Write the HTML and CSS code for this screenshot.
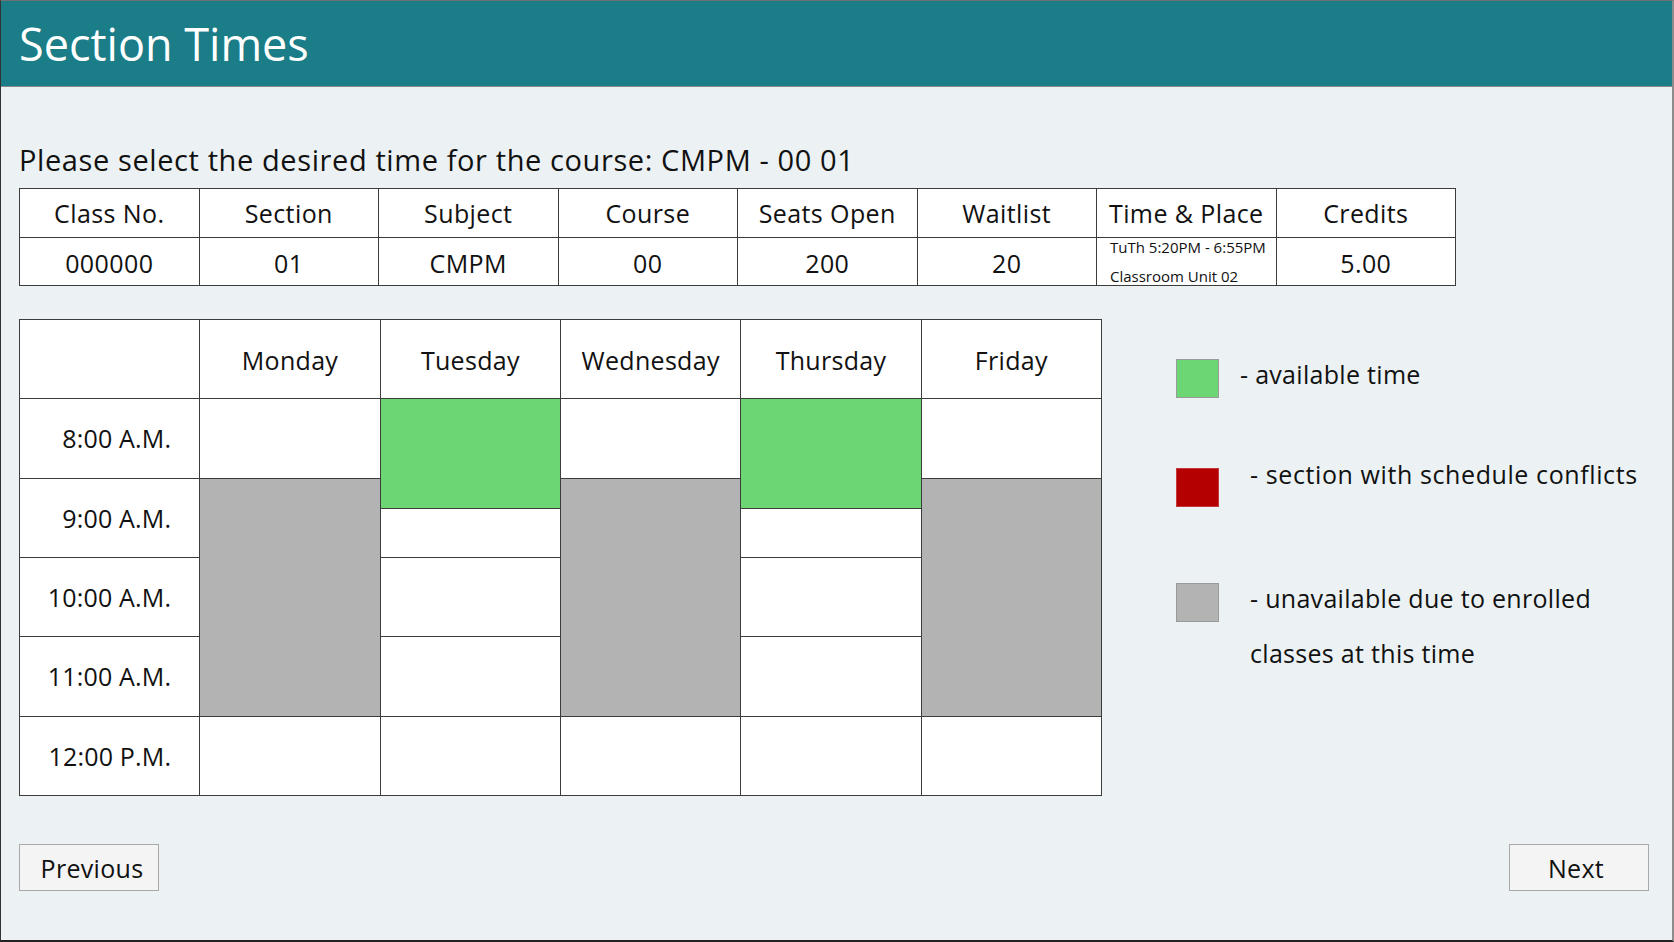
FILE: index.html
```html
<!DOCTYPE html>
<html lang="en">
<head>
<meta charset="utf-8">
<title>Section Times</title>
<link rel="stylesheet" href="styles.css">
</head>
<body>
<div class="page">
  <header class="topbar">
    <h1 class="title">Section Times</h1>
  </header>
  <main class="content">
    <p class="prompt">Please select the desired time for the course: CMPM - 00 01</p>

    <div class="info-table">
      <div class="info-cell">Class No.</div>
      <div class="info-cell">Section</div>
      <div class="info-cell">Subject</div>
      <div class="info-cell">Course</div>
      <div class="info-cell">Seats Open</div>
      <div class="info-cell">Waitlist</div>
      <div class="info-cell">Time &amp; Place</div>
      <div class="info-cell">Credits</div>
      <div class="info-cell info-cell--data">000000</div>
      <div class="info-cell info-cell--data">01</div>
      <div class="info-cell info-cell--data">CMPM</div>
      <div class="info-cell info-cell--data">00</div>
      <div class="info-cell info-cell--data">200</div>
      <div class="info-cell info-cell--data">20</div>
      <div class="info-cell info-cell--place">
        <div class="place-line">TuTh 5:20PM - 6:55PM</div>
        <div class="place-line place-line--room">Classroom Unit 02</div>
      </div>
      <div class="info-cell info-cell--data">5.00</div>
    </div>

    <div class="schedule-row">
      <div class="schedule">
        <div class="cell"></div>
        <div class="cell day">Monday</div>
        <div class="cell day">Tuesday</div>
        <div class="cell day">Wednesday</div>
        <div class="cell day">Thursday</div>
        <div class="cell day">Friday</div>

        <div class="cell time">8:00 A.M.</div>
        <div class="cell"></div>
        <div class="cell split"><div class="avail"></div><div class="rest"></div></div>
        <div class="cell"></div>
        <div class="cell split"><div class="avail"></div><div class="rest"></div></div>
        <div class="cell"></div>

        <div class="cell time">9:00 A.M.</div>
        <div class="cell busy"></div>
        <div class="cell busy"></div>
        <div class="cell busy"></div>

        <div class="cell time">10:00 A.M.</div>
        <div class="cell"></div>
        <div class="cell"></div>

        <div class="cell time">11:00 A.M.</div>
        <div class="cell"></div>
        <div class="cell"></div>

        <div class="cell time">12:00 P.M.</div>
        <div class="cell"></div>
        <div class="cell"></div>
        <div class="cell"></div>
        <div class="cell"></div>
        <div class="cell"></div>
      </div>

      <div class="legend">
        <div class="legend-item legend-item--first">
          <span class="swatch swatch--green"></span>
          <span class="legend-text legend-text--near">- available time</span>
        </div>
        <div class="legend-item legend-item--second">
          <span class="swatch swatch--red"></span>
          <span class="legend-text">- section with schedule conflicts</span>
        </div>
        <div class="legend-item legend-item--third">
          <span class="swatch swatch--gray"></span>
          <span class="legend-text legend-text--tight">- unavailable due to enrolled<br>classes at this time</span>
        </div>
      </div>
    </div>

    <div class="actions">
      <button class="btn btn--prev" type="button">Previous</button>
      <button class="btn btn--next" type="button">Next</button>
    </div>
  </main>
</div>
</body>
</html>
```
FILE: styles.css
```css
* { box-sizing: border-box; }

html, body {
  margin: 0;
  padding: 0;
}

body {
  font-family: "Open Sans", "Liberation Sans", sans-serif;
  color: #111;
  background: #ecf1f4;
}

.page {
  width: 1674px;
  height: 942px;
  background: #ecf1f4;
  border-top: 1px solid #6f6f6f;
  border-left: 1px solid #333;
  border-right: 2px solid #8c8c8c;
  border-bottom: 2px solid #222;
  display: flex;
  flex-direction: column;
}

.topbar {
  height: 86px;
  background: #1a7d87;
  border-bottom: 1px solid #8a8a8a;
  padding: 20px 18px 0;
  flex-shrink: 0;
}

.title {
  margin: 0;
  font-weight: 400;
  font-size: 45px;
  line-height: 45px;
  color: #fff;
}

.content {
  padding: 0 23px 0 18px;
}

.prompt {
  margin: 55px 0 11px;
  font-size: 29px;
  line-height: 35px;
  letter-spacing: 0.6px;
}

.info-table {
  width: 1437px;
  height: 98px;
  display: grid;
  grid-template-columns: repeat(8, minmax(0, 1fr));
  grid-template-rows: repeat(2, minmax(0, 1fr));
  gap: 1px;
  background: #3c3c3c;
  border: 1px solid #3c3c3c;
}

.info-cell {
  background: #fff;
  display: flex;
  align-items: center;
  justify-content: center;
  font-size: 25px;
  letter-spacing: 0.4px;
  padding-top: 1px;
  white-space: nowrap;
  overflow: visible;
}

.info-cell--data {
  padding-top: 4px;
}

.info-cell--place {
  flex-direction: column;
  align-items: flex-start;
  justify-content: flex-start;
  padding: 0 0 0 13px;
  font-size: 15px;
  letter-spacing: 0;
}

.place-line {
  line-height: 18px;
}

.place-line--room {
  margin-top: 11px;
}

.schedule-row {
  display: flex;
  align-items: flex-start;
  margin-top: 33px;
}

.schedule {
  width: 1083px;
  height: 477px;
  display: grid;
  grid-template-columns: repeat(6, minmax(0, 1fr));
  grid-template-rows: repeat(6, minmax(0, 1fr));
  gap: 1px;
  background: #3c3c3c;
  border: 1px solid #3c3c3c;
  flex-shrink: 0;
}

.cell {
  background: #fff;
  display: flex;
  align-items: center;
  justify-content: center;
  font-size: 25px;
  letter-spacing: 0.3px;
}

.day {
  padding-top: 2px;
}

.time {
  justify-content: flex-end;
  padding: 0 28px 0 0;
  letter-spacing: 0.2px;
}

.busy {
  grid-row: span 3;
  background: #b3b3b3;
}

.split {
  grid-row: span 2;
  flex-direction: column;
  align-items: stretch;
  justify-content: flex-start;
}

.avail {
  height: 110px;
  background: #6cd574;
  border-bottom: 1px solid #3c3c3c;
}

.rest {
  flex: 1;
  background: #fff;
}

.legend {
  margin-left: 74px;
  padding-top: 28px;
  display: flex;
  flex-direction: column;
}

.legend-item {
  display: flex;
  align-items: flex-start;
}

.legend-item--second { margin-top: 45px; }
.legend-item--third { margin-top: 64px; }

.swatch {
  width: 43px;
  height: 39px;
  margin-top: 12px;
  border: 1px solid #9a9a9a;
  flex-shrink: 0;
}

.legend-item--second .swatch { margin-top: 21px; }

.swatch--green { background: #6cd574; }
.swatch--red { background: #b40000; border-color: #c23a3a; }
.swatch--gray { background: #b3b3b3; }

.legend-text {
  margin-left: 31px;
  font-size: 25px;
  line-height: 55px;
  letter-spacing: 0.6px;
  white-space: nowrap;
}

.legend-text--near {
  margin-left: 21px;
  letter-spacing: 0.3px;
}

.legend-text--tight {
  letter-spacing: 0.3px;
}

.actions {
  display: flex;
  justify-content: space-between;
  margin-top: 48px;
}

.btn {
  width: 140px;
  height: 47px;
  border: 1px solid #a9a9a9;
  background: #f4f4f4;
  font-family: "Open Sans", "Liberation Sans", sans-serif;
  font-size: 25px;
  letter-spacing: 0.3px;
  color: #111;
  padding: 0;
  border-radius: 0;
}

.btn--prev { padding-left: 6px; }
.btn--next { padding-right: 6px; }
```
